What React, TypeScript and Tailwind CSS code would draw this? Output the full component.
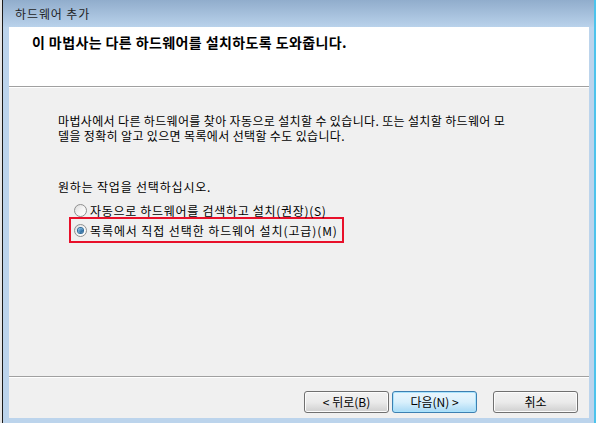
import React from "react";

const font = { fontFamily: '"Noto Sans CJK KR", "Noto Sans", sans-serif' };

function Radio({ checked }: { checked?: boolean }) {
  return (
    <span className="relative flex h-[13px] w-[13px] shrink-0 items-center justify-center rounded-full border border-[#8f8f8f] bg-gradient-to-br from-[#dcdcdc] via-[#f4f4f4] to-[#ffffff]">
      {checked && (
        <span className="h-[5px] w-[5px] rounded-full bg-gradient-to-br from-[#8fd0f7] to-[#0b4f86] shadow-[0_0_0_1px_#2f6b9a]" />
      )}
    </span>
  );
}

function WinButton({
  children,
  primary,
}: {
  children: React.ReactNode;
  primary?: boolean;
}) {
  return (
    <button
      className={
        primary
          ? "flex h-[22px] w-[85px] items-center justify-center rounded-[3px] border border-[#3c7fb1] bg-gradient-to-b from-[#eaf6fd] via-[#d9f0fc] to-[#a7d9f5] text-[12px] text-black shadow-[inset_0_0_0_1px_#a9e4fd]"
          : "flex h-[22px] w-[85px] items-center justify-center rounded-[3px] border border-[#707070] bg-gradient-to-b from-[#f2f2f2] via-[#ebebeb] to-[#cfcfcf] text-[12px] text-black shadow-[inset_0_0_0_1px_#fcfcfc]"
      }
    >
      {children}
    </button>
  );
}

export default function App() {
  return (
    <div className="flex h-[423px] w-[596px] bg-[#e6e6e6]" style={font}>
      <div className="ml-[2px] flex w-[594px] flex-col border-l border-r-2 border-l-[#1a1a1a] border-r-[#4cc3ec] bg-[#bcd4ec]">
        {/* title bar */}
        <div className="flex h-[27px] shrink-0 items-center bg-gradient-to-b from-[#91adcc] to-[#b9d2eb] pl-[12px] text-[12px] tracking-[0.9px] text-[#1e1e1e]">
          하드웨어 추가
        </div>

        <div className="mx-[5px] mb-[5px] ml-[6px] flex flex-1 flex-col bg-[#f0f0f0]">
          {/* header */}
          <div className="h-[60px] shrink-0 border-b border-[#a0a0a0] bg-white pl-[23px] pt-[6px]">
            <p className="text-[14px] font-bold leading-[19px] tracking-[0.4px] text-black">
              이 마법사는 다른 하드웨어를 설치하도록 도와줍니다.
            </p>
          </div>
          <div className="h-px bg-white" />

          {/* body */}
          <div className="flex-1 pl-[49px] pt-[25px] text-[12px] text-black">
            <p className="w-[490px] leading-[15px] tracking-[0.35px]">
              마법사에서 다른 하드웨어를 찾아 자동으로 설치할 수 있습니다. 또는 설치할 하드웨어 모
              <br />
              델을 정확히 알고 있으면 목록에서 선택할 수도 있습니다.
            </p>

            <p className="mt-[36px] leading-[15px] tracking-[0.8px]">원하는 작업을 선택하십시오.</p>

            <div className="mt-[6px] flex h-[20px] items-center pl-[16px]">
              <Radio />
              <span className="ml-[3px] leading-[15px] tracking-[0.7px]">
                자동으로 하드웨어를 검색하고 설치(권장)(S)
              </span>
            </div>
            <div className="ml-[11px] mt-[-3px] flex h-[26px] w-[275px] items-center border-2 border-[#e8102a] pl-[3px]">
              <Radio checked />
              <span className="ml-[3px] leading-[15px] tracking-[0.9px]">
                목록에서 직접 선택한 하드웨어 설치(고급)(M)
              </span>
            </div>
          </div>

          {/* footer */}
          <div className="h-px bg-[#a0a0a0]" />
          <div className="h-px bg-white" />
          <div className="flex h-[40px] items-start justify-end pr-[11px] pt-[13px]">
            <WinButton>&lt; 뒤로(B)</WinButton>
            <div className="w-[3px]" />
            <WinButton primary>다음(N) &gt;</WinButton>
            <div className="w-[16px]" />
            <WinButton>취소</WinButton>
          </div>
        </div>
      </div>
    </div>
  );
}
